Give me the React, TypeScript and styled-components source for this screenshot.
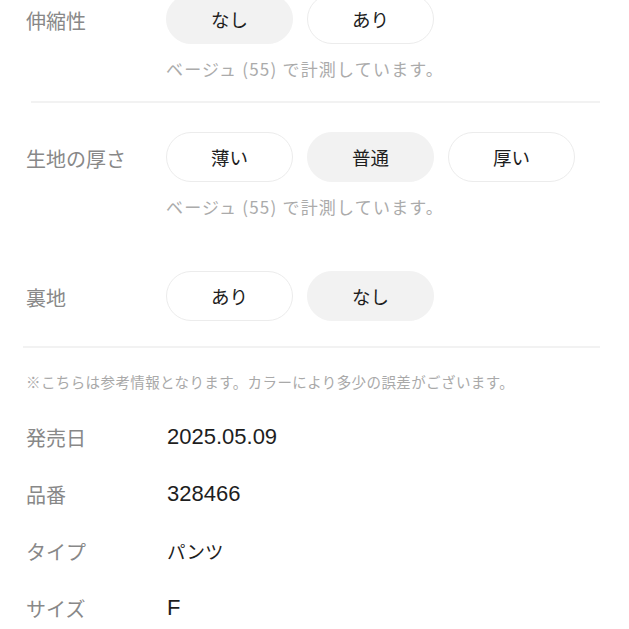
import styled, { createGlobalStyle } from 'styled-components';

interface AttrProps {
    label: string
    options: string[]
    selected: number
    note?: string
}

const NOTE = 'ベージュ (55) で計測しています。';

const GlobalStyle = createGlobalStyle`
    html, body {
        margin: 0;
        padding: 0;
        background: #ffffff;
        overflow: hidden;
    }
    body {
        font-family: "Noto Sans CJK JP", "Noto Sans", sans-serif;
        -webkit-font-smoothing: antialiased;
    }
`

const Attr = (props: AttrProps) => {
    const { label, options, selected, note } = props;
    return (
        <AttrBlock>
            <AttrRow>
                <Label>{label}</Label>
                <Pills>
                    {options.map((o, i) => (
                        <Pill key={o} $on={i === selected}>{o}</Pill>
                    ))}
                </Pills>
            </AttrRow>
            {note && <Note>{note}</Note>}
        </AttrBlock>
    );
}

const info = [
    { label: '発売日', value: '2025.05.09' },
    { label: '品番', value: '328466' },
    { label: 'タイプ', value: 'パンツ', kana: true },
    { label: 'サイズ', value: 'F' },
];

const App = () => {
    return (
        <>
            <GlobalStyle />
            <Page>
                <Attr label='伸縮性' options={['なし', 'あり']} selected={0} note={NOTE} />
                <Divider $inset={6} $top={21} $bottom={29} />
                <Group>
                    <Attr label='生地の厚さ' options={['薄い', '普通', '厚い']} selected={1} note={NOTE} />
                    <Attr label='裏地' options={['あり', 'なし']} selected={1} />
                </Group>
                <Divider $inset={-2} $top={25} $bottom={24} />
                <Disclaimer>※こちらは参考情報となります。カラーにより多少の誤差がございます。</Disclaimer>
                <InfoList>
                    {info.map(item => (
                        <InfoRow key={item.label}>
                            <InfoLabel>{item.label}</InfoLabel>
                            <Value $kana={item.kana}>{item.value}</Value>
                        </InfoRow>
                    ))}
                </InfoList>
            </Page>
        </>
    );
}

const Page = styled.div`
    display: flex;
    flex-direction: column;
    margin-top: -6px;
    padding: 0 29px 0 25px;
`

const Group = styled.div`
    display: flex;
    flex-direction: column;
    gap: 53px;
`

const AttrBlock = styled.div`
    display: flex;
    flex-direction: column;
`

const AttrRow = styled.div`
    display: flex;
    align-items: center;
`

const Label = styled.div`
    width: 140px;
    flex-shrink: 0;
    padding-left: 1px;
    font-size: 20px;
    line-height: 28px;
    color: #888888;
    white-space: nowrap;
    padding-top: 3px;
`

const Pills = styled.div`
    display: flex;
    gap: 14px;
`

const Pill = styled.div<{ $on?: boolean }>`
    box-sizing: border-box;
    width: 127px;
    height: 50px;
    border-radius: 25px;
    display: flex;
    align-items: center;
    justify-content: center;
    font-size: 18.5px;
    color: #1e1e1e;
    background: ${({ $on }) => ($on ? '#f2f2f2' : '#ffffff')};
    border: 1px solid ${({ $on }) => ($on ? '#f2f2f2' : '#ececec')};
`

const Note = styled.div`
    margin: 14px 0 0 141px;
    font-size: 17px;
    line-height: 22px;
    letter-spacing: 1.2px;
    color: #ababab;
    white-space: nowrap;
`

const Divider = styled.div<{ $inset: number, $top: number, $bottom: number }>`
    height: 2px;
    background: #f2f2f2;
    margin: ${({ $top, $bottom, $inset }) => `${$top}px 0 ${$bottom}px ${$inset}px`};
`

const Disclaimer = styled.div`
    padding-left: 1px;
    font-size: 14.5px;
    line-height: 20px;
    letter-spacing: 0.4px;
    color: #a9a9a9;
    white-space: nowrap;
`

const InfoList = styled.div`
    display: flex;
    flex-direction: column;
    gap: 27px;
    margin-top: 30px;
    padding-left: 1px;
`

const InfoRow = styled.div`
    display: flex;
    align-items: center;
    height: 30px;
`

const InfoLabel = styled.div`
    width: 141px;
    flex-shrink: 0;
    font-size: 20px;
    color: #888888;
`

const Value = styled.div<{ $kana?: boolean }>`
    font-family: "Liberation Sans", "Noto Sans CJK JP", sans-serif;
    font-size: ${({ $kana }) => ($kana ? '18.5px' : '22px')};
    color: #1e1e1e;
`

export default App;
